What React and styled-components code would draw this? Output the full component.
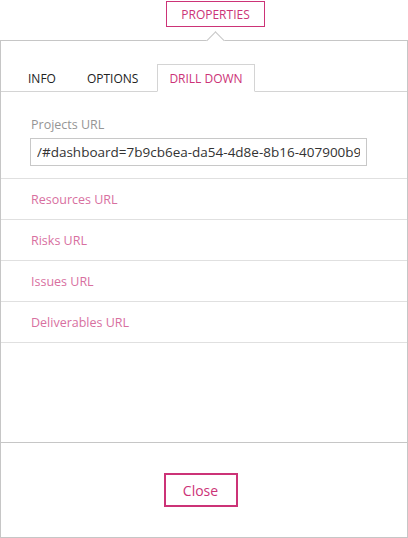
import React, { useState } from "react";
import styled, { createGlobalStyle } from "styled-components";

const GlobalStyle = createGlobalStyle`
  html, body {
    margin: 0;
    padding: 0;
    background: #fff;
  }
  body {
    font-family: "Open Sans", "Liberation Sans", sans-serif;
  }
`;

const pink = "#cc3377";
const lightPink = "#d8709f";

const Page = styled.div`
  width: 408px;
  height: 538px;
  display: flex;
  flex-direction: column;
  box-sizing: border-box;
`;

const Header = styled.div`
  height: 40px;
  display: flex;
  align-items: flex-start;
  padding-top: 1px;
  padding-left: 166px;
  box-sizing: border-box;
`;

const PropertiesButton = styled.button`
  height: 26px;
  width: 99px;
  border: 1px solid ${pink};
  background: #fff;
  color: ${pink};
  font-family: inherit;
  font-size: 12px;
  padding: 0;
  cursor: pointer;
`;

const Panel = styled.div`
  position: relative;
  flex: 1;
  border: 1px solid #c6c6c6;
  display: flex;
  flex-direction: column;
  background: #fff;
`;

const Notch = styled.div`
  position: absolute;
  top: -7px;
  left: 208px;
  width: 12px;
  height: 12px;
  background: #fff;
  border-top: 1px solid #c6c6c6;
  border-left: 1px solid #c6c6c6;
  transform: rotate(45deg);
`;

const TabBar = styled.div`
  display: flex;
  align-items: flex-end;
  gap: 7px;
  padding: 23px 0 0 15px;
  border-bottom: 1px solid #d4d4d4;
`;

const Tab = styled.button`
  height: 28px;
  margin-bottom: -1px;
  padding: 0 11px;
  border: 1px solid ${(p) => (p.$active ? "#d4d4d4" : "transparent")};
  border-bottom-color: ${(p) => (p.$active ? "#fff" : "transparent")};
  background: ${(p) => (p.$active ? "#fff" : "transparent")};
  color: ${(p) => (p.$active ? pink : "#222")};
  font-family: inherit;
  font-size: 12px;
  cursor: pointer;
`;

const Field = styled.div`
  padding: 24px 40px 12px 29px;
  border-bottom: 1px solid #e0e0e0;
  display: flex;
  flex-direction: column;
  gap: 5px;
`;

const FieldLabel = styled.label`
  font-size: 12.5px;
  color: #959595;
  padding-left: 1px;
`;

const UrlInput = styled.input`
  height: 28px;
  box-sizing: border-box;
  width: 337px;
  border: 1px solid #c8c8c8;
  padding: 0 6px;
  font-family: inherit;
  font-size: 13.5px;
  color: #333;
  outline: none;
`;

const LinkRow = styled.div`
  height: 40px;
  border-bottom: 1px solid #e0e0e0;
  display: flex;
  align-items: center;
  padding-left: 30px;
  font-size: 12.5px;
  color: ${lightPink};
`;

const Spacer = styled.div`
  flex: 1;
`;

const Footer = styled.div`
  height: 95px;
  border-top: 1px solid #c6c6c6;
  display: flex;
  justify-content: center;
  align-items: flex-start;
  padding-top: 30px;
  padding-right: 7px;
  box-sizing: border-box;
`;

const CloseButton = styled.button`
  width: 74px;
  height: 34px;
  border: 2px solid ${pink};
  background: #fff;
  color: ${pink};
  font-family: inherit;
  font-size: 14px;
  cursor: pointer;
`;

const tabs = ["INFO", "OPTIONS", "DRILL DOWN"];
const links = ["Resources URL", "Risks URL", "Issues URL", "Deliverables URL"];

export default function App() {
  const [active, setActive] = useState("DRILL DOWN");
  const [url, setUrl] = useState("/#dashboard=7b9cb6ea-da54-4d8e-8b16-407900b9c1f2");

  return (
    <Page>
      <GlobalStyle />
      <Header>
        <PropertiesButton>PROPERTIES</PropertiesButton>
      </Header>
      <Panel>
        <Notch />
        <TabBar>
          {tabs.map((t) => (
            <Tab key={t} $active={t === active} onClick={() => setActive(t)}>
              {t}
            </Tab>
          ))}
        </TabBar>
        <Field>
          <FieldLabel>Projects URL</FieldLabel>
          <UrlInput value={url} onChange={(e) => setUrl(e.target.value)} />
        </Field>
        {links.map((l) => (
          <LinkRow key={l}>{l}</LinkRow>
        ))}
        <Spacer />
        <Footer>
          <CloseButton>Close</CloseButton>
        </Footer>
      </Panel>
    </Page>
  );
}
